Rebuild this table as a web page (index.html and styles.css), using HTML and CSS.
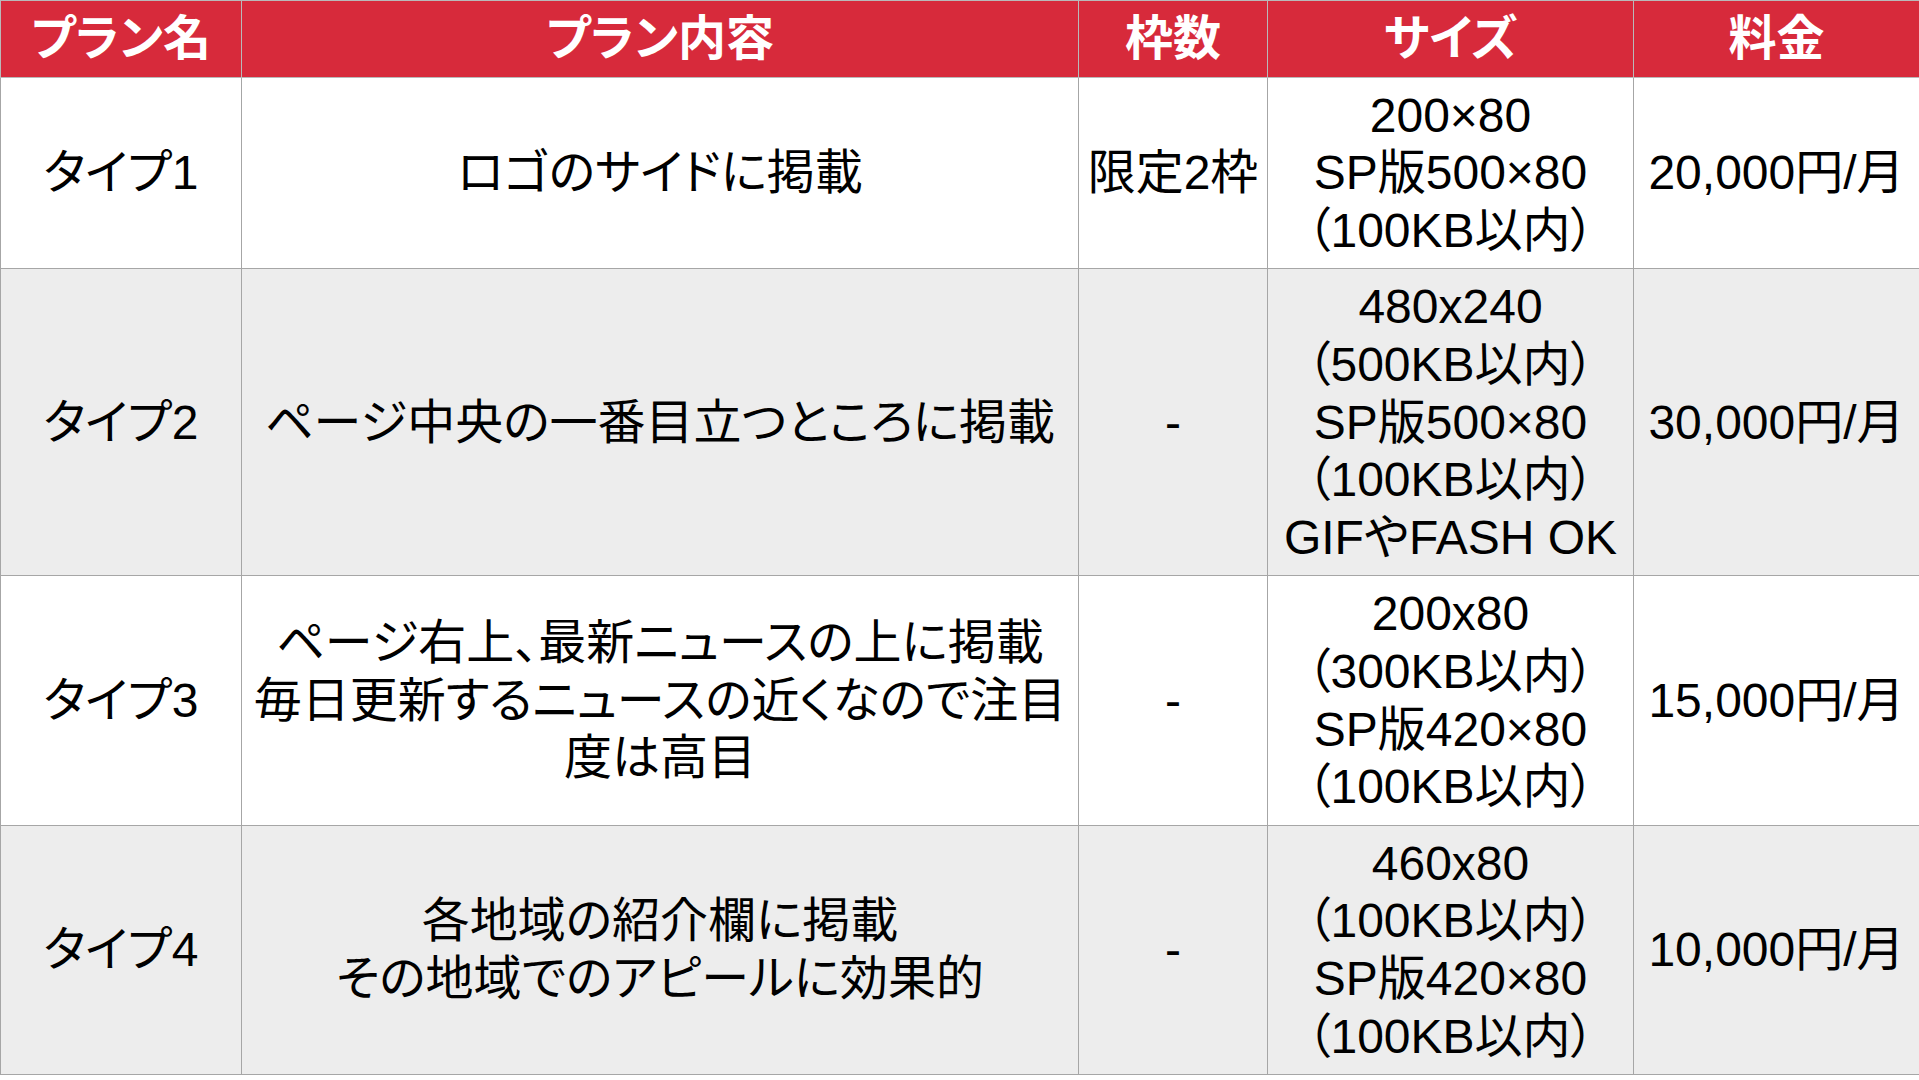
FILE: index.html
```html
<!DOCTYPE html>
<html lang="ja">
<head>
<meta charset="utf-8">
<title>プラン一覧</title>
<link rel="stylesheet" href="styles.css">
</head>
<body>
<table class="plans">
  <colgroup>
    <col class="c-name">
    <col class="c-desc">
    <col class="c-slots">
    <col class="c-size">
    <col class="c-price">
  </colgroup>
  <thead>
    <tr class="head">
      <th>プラン名</th>
      <th>プラン内容</th>
      <th>枠数</th>
      <th>サイズ</th>
      <th>料金</th>
    </tr>
  </thead>
  <tbody>
    <tr class="odd">
      <td>タイプ1</td>
      <td>ロゴのサイドに掲載</td>
      <td>限定2枠</td>
      <td>200×80<br>SP版500×80<br>（100KB以内）</td>
      <td>20,000円/月</td>
    </tr>
    <tr class="even">
      <td>タイプ2</td>
      <td>ページ中央の一番目立つところに掲載</td>
      <td>-</td>
      <td>480x240<br>（500KB以内）<br>SP版500×80<br>（100KB以内）<br>GIFやFASH OK</td>
      <td>30,000円/月</td>
    </tr>
    <tr class="odd">
      <td>タイプ3</td>
      <td>ページ右上、最新ニュースの上に掲載<br>毎日更新するニュースの近くなので注目<br>度は高目</td>
      <td>-</td>
      <td>200x80<br>（300KB以内）<br>SP版420×80<br>（100KB以内）</td>
      <td>15,000円/月</td>
    </tr>
    <tr class="even">
      <td>タイプ4</td>
      <td>各地域の紹介欄に掲載<br>その地域でのアピールに効果的</td>
      <td>-</td>
      <td>460x80<br>（100KB以内）<br>SP版420×80<br>（100KB以内）</td>
      <td>10,000円/月</td>
    </tr>
  </tbody>
</table>
</body>
</html>
```

FILE: styles.css
```css
html, body {
  margin: 0;
  padding: 0;
  background: #ffffff;
}

.plans {
  width: 1919px;
  table-layout: fixed;
  border-collapse: collapse;
  font-family: "Liberation Sans", "Noto Sans CJK JP", sans-serif;
  font-feature-settings: "palt";
  font-size: 48px;
  line-height: 57.6px;
  color: #000000;
}

.c-name { width: 241px; }
.c-desc { width: 837px; }
.c-slots { width: 189px; }
.c-size { width: 366px; }
.c-price { width: 286px; }

.plans th,
.plans td {
  border: 1px solid #a6a6a6;
  padding: 9px 0;
  text-align: center;
  vertical-align: middle;
  white-space: nowrap;
  overflow: hidden;
}

.head th {
  background: #d72a3b;
  color: #ffffff;
  font-weight: bold;
  border-color: #b9b9b9;
}

.odd td {
  background: #ffffff;
}

.even td {
  background: #ededed;
}
```
